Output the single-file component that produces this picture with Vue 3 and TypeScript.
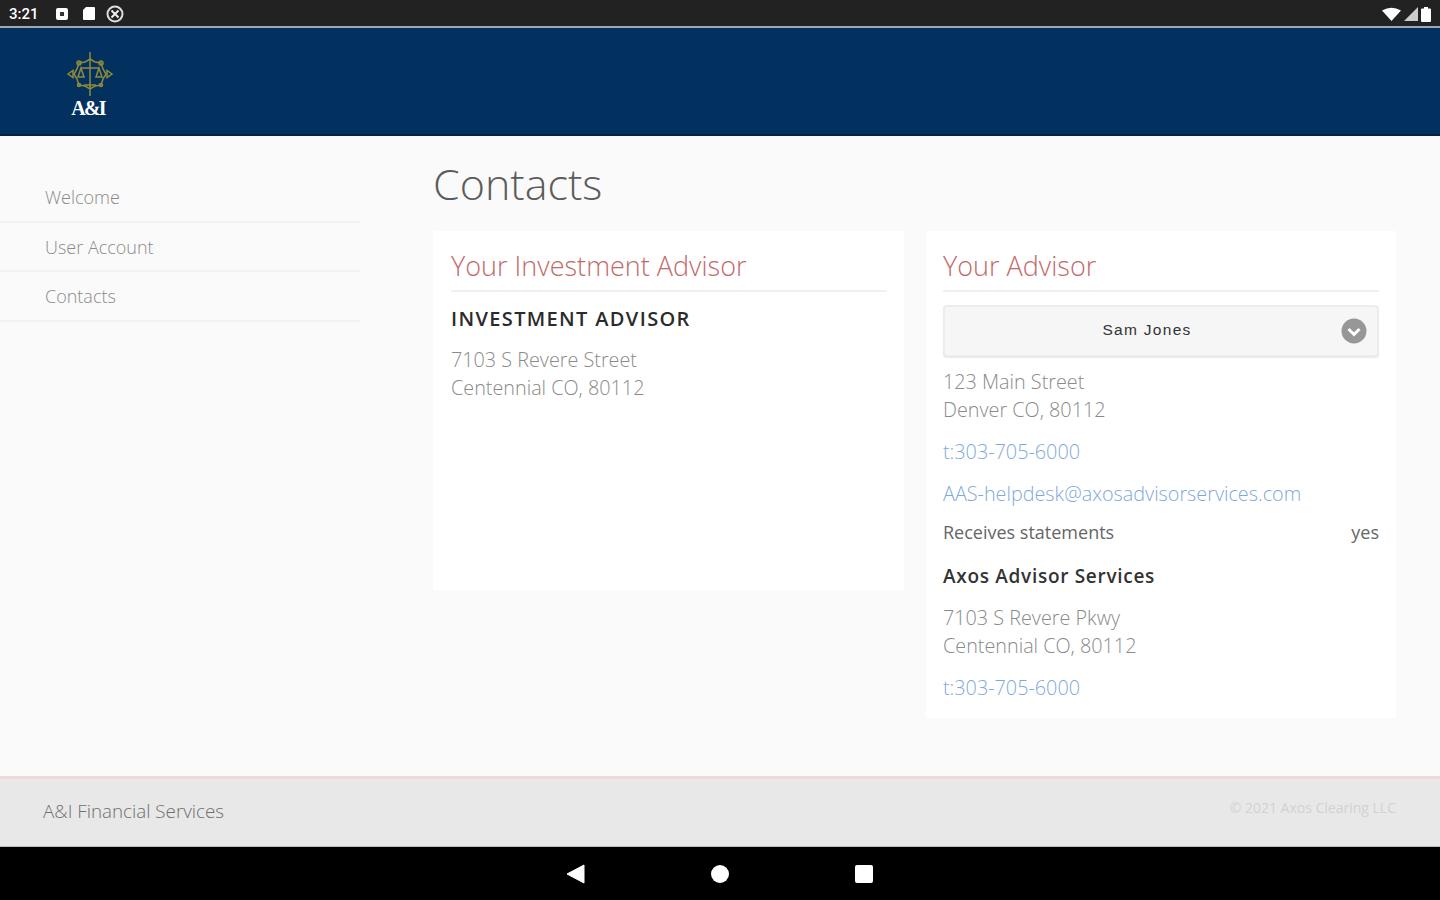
<script setup lang="ts">
const nav: string[] = ['Welcome', 'User Account', 'Contacts']
</script>

<template>
  <div class="screen">
    <div class="status">
      <div class="status-left">
        <span class="time">3:21</span>
        <svg class="si" width="14" height="14" viewBox="0 0 14 14"><rect x="1" y="1" width="12" height="12" rx="2" fill="#fff"/><rect x="5" y="5" width="4" height="4" fill="#333"/></svg>
        <svg class="si" width="14" height="15" viewBox="0 0 14 15"><path d="M4 1h8a1 1 0 0 1 1 1v11a1 1 0 0 1-1 1H2a1 1 0 0 1-1-1V4z" fill="#fff"/></svg>
        <svg class="si" width="18" height="18" viewBox="0 0 18 18"><circle cx="9" cy="9" r="7.5" fill="none" stroke="#ddd" stroke-width="2"/><path d="M5.5 5.5l7 7M12.5 5.5l-7 7" stroke="#eee" stroke-width="2"/></svg>
      </div>
      <div class="status-right">
        <svg width="19" height="14" viewBox="0 0 19 14"><path d="M0 3.5Q9.500-2 19 3.500L9.500 14z" fill="#fff"/></svg>
        <svg width="14" height="14" viewBox="0 0 14 14"><path d="M14 0V14H0z" fill="#ccc"/></svg>
        <svg width="10" height="15" viewBox="0 0 10 15"><path d="M3 0h4v1.500h2a1 1 0 0 1 1 1V14a1 1 0 0 1-1 1H1a1 1 0 0 1-1-1V2.500a1 1 0 0 1 1-1h2z" fill="#fff"/></svg>
      </div>
    </div>

    <header class="header">
      <div class="logo">
        <svg width="46" height="44" viewBox="0 0 46 44" fill="none" stroke="#8f8a3a" stroke-width="1.500">
          <path d="M23 0v9M23 34v10M1 22l5-3.500v7zM45 22l-5-3.500v7z" />
          <path d="M23 7l5 3 6 1 2 6 3 5-3 5-2 6-6 1-5 3-5-3-6-1-2-6-3-5 3-5 2-6 6-1z" />
          <path d="M23 9v26M14 16h18M14 16l-3 9h6zM32 16l-3 9h6zM17 33h12" />
          <circle cx="12" cy="11" r="2" />
          <circle cx="34" cy="11" r="2" />
          <circle cx="12" cy="33" r="1.500" />
          <circle cx="34" cy="33" r="1.500" />
        </svg>
        <span class="logo-text">A&amp;I</span>
      </div>
    </header>

    <div class="body">
      <aside class="side">
        <a v-for="item in nav" :key="item" class="side-item">{{ item }}</a>
      </aside>
      <main class="main">
        <h1 class="title">Contacts</h1>
        <div class="cards">
          <section class="card card-a">
            <h2 class="card-title">Your Investment Advisor</h2>
            <h3 class="firm caps">INVESTMENT ADVISOR</h3>
            <p class="addr">7103 S Revere Street<br />Centennial CO, 80112</p>
          </section>
          <section class="card">
            <h2 class="card-title">Your Advisor</h2>
            <div class="select">
              <span class="select-label">Sam Jones</span>
              <svg class="chev" width="26" height="26" viewBox="0 0 26 26">
                <circle cx="13" cy="13" r="12.500" fill="#979797"/>
                <path d="M7.500 11l5.500 5.500 5.500-5.500" fill="none" stroke="#fff" stroke-width="3"/>
              </svg>
            </div>
            <p class="addr addr-b">123 Main Street<br />Denver CO, 80112</p>
            <a class="link phone">t:303-705-6000</a>
            <a class="link mail">AAS-helpdesk@axosadvisorservices.com</a>
            <div class="row"><span>Receives statements</span><span>yes</span></div>
            <h3 class="firm firm-b">Axos Advisor Services</h3>
            <p class="addr">7103 S Revere Pkwy<br />Centennial CO, 80112</p>
            <a class="link phone">t:303-705-6000</a>
          </section>
        </div>
      </main>
    </div>

    <footer class="footer">
      <span class="foot-name">A&amp;I Financial Services</span>
      <span class="foot-copy">© 2021 Axos Clearing LLC</span>
    </footer>

    <div class="navbar">
      <svg width="20" height="20" viewBox="0 0 20 20"><path d="M1 10L18 1v18z" fill="#fff" stroke="#fff" stroke-linejoin="round"/></svg>
      <svg width="18" height="18" viewBox="0 0 18 18"><circle cx="9" cy="9" r="9" fill="#fff"/></svg>
      <svg width="20" height="20" viewBox="0 0 20 20"><rect x="1" y="1" width="18" height="18" rx="2" fill="#fff"/></svg>
    </div>
  </div>
</template>

<style scoped>
.screen {
  width: 1440px;
  height: 900px;
  display: flex;
  flex-direction: column;
  overflow: hidden;
  background: #fafafa;
  font-family: "Open Sans", "Liberation Sans", sans-serif;
  font-weight: 300;
  color: #777;
}
.status {
  height: 26px;
  flex: none;
  background: #222;
  display: flex;
  justify-content: space-between;
  align-items: center;
  padding: 0 9px 0 9px;
}
.status-left, .status-right { display: flex; align-items: center; }
.status-left { padding-top: 1px; }
.status-right { gap: 3px; padding-top: 2px; }
.time {
  color: #fff;
  font-family: "Roboto", sans-serif;
  font-size: 15px;
  font-weight: 500;
  width: 46px;
}
.si { margin-right: 13px; flex: none; }
.si:last-child { margin-right: 0; margin-left: -3px; }
.header {
  height: 110px;
  flex: none;
  box-sizing: border-box;
  background: #03315f;
  border-top: 2px solid #9fa6b3;
  border-bottom: 2px solid #02204a;
  padding: 24px 0 0 67px;
}
.logo { width: 46px; display: flex; flex-direction: column; align-items: center; }
.logo-text {
  color: #fff;
  font-family: "Liberation Serif", serif;
  font-size: 20px;
  font-weight: 700;
  line-height: 20px;
  margin: 2px 4px 0 0;
  letter-spacing: -1.800px;
}
.body { flex: 1; min-height: 0; display: flex; }
.side { width: 360px; flex: none; padding-top: 37px; box-sizing: border-box; }
.side-item {
  display: block;
  height: 49.500px;
  box-sizing: border-box;
  padding: 12px 0 0 45px;
  font-size: 18px;
  line-height: 24px;
  color: #8a8a8a;
  border-bottom: 2px solid #f1f1f1;
}
.main { flex: 1; padding: 0 44px 0 73px; }
.title {
  margin: 0;
  padding-top: 19px;
  height: 95px;
  box-sizing: border-box;
  font-size: 43px;
  line-height: 58px;
  font-weight: 300;
  color: #5c5c5c;
}
.cards { display: grid; grid-template-columns: 471px 470px; gap: 22px; align-items: start; }
.card { background: #fff; padding: 17px 17px 17px; box-sizing: border-box; }
.card-a { height: 359px; padding-left: 18px; }
.card-title {
  margin: 0 0 13px;
  height: 44px;
  box-sizing: border-box;
  border-bottom: 2px solid #f0f0f0;
  font-size: 27px;
  line-height: 36px;
  font-weight: 300;
  color: #c4696b;
}
.firm { margin: 0; font-size: 20px; line-height: 27px; font-weight: 600; color: #2b2b2b; }
.caps { letter-spacing: 1.350px; }
.firm-b { font-size: 19px; margin-top: 19px; color: #333; letter-spacing: 0.700px; }
.addr { margin: 14px 0 0; font-size: 19.800px; line-height: 27.500px; color: #8a8a8a; }
.addr-b { margin-top: 11px; }
.select {
  height: 52px;
  box-sizing: border-box;
  background: #f6f6f6;
  border: 2px solid #ececec;
  border-radius: 4px;
  box-shadow: 0 1px 1px #e8e8e8;
  display: flex;
  align-items: center;
  justify-content: center;
  position: relative;
  padding-right: 28px;
}
.select-label {
  font-family: "Liberation Sans", sans-serif;
  font-size: 15.500px;
  font-weight: 400;
  color: #333;
  letter-spacing: 1.300px;
  margin-top: -2px;
}
.chev { position: absolute; right: 10px; top: 11px; }
.link { display: block; color: #7fa9dc; font-size: 19.800px; line-height: 27px; margin-top: 15px; }
.mail { margin-top: 15px; }
.row {
  display: flex;
  justify-content: space-between;
  margin-top: 13px;
  font-size: 18px;
  line-height: 24px;
  color: #666;
  font-weight: 400;
}
.footer {
  height: 71px;
  flex: none;
  box-sizing: border-box;
  background: #e8e8e8;
  border-top: 3px solid #ecd9d9;
  border-bottom: 1px solid #bbb;
  display: flex;
  justify-content: space-between;
  padding: 0 44px 0 43px;
}
.foot-name { font-size: 18.800px; line-height: 24px; margin-top: 20px; color: #6f6f6f; }
.foot-copy { font-size: 14px; line-height: 20px; margin-top: 19px; color: #d2d2d2; font-weight: 400; }
.navbar {
  height: 53px;
  flex: none;
  background: #000;
  display: flex;
  justify-content: center;
  align-items: center;
  gap: 125px;
}
</style>
